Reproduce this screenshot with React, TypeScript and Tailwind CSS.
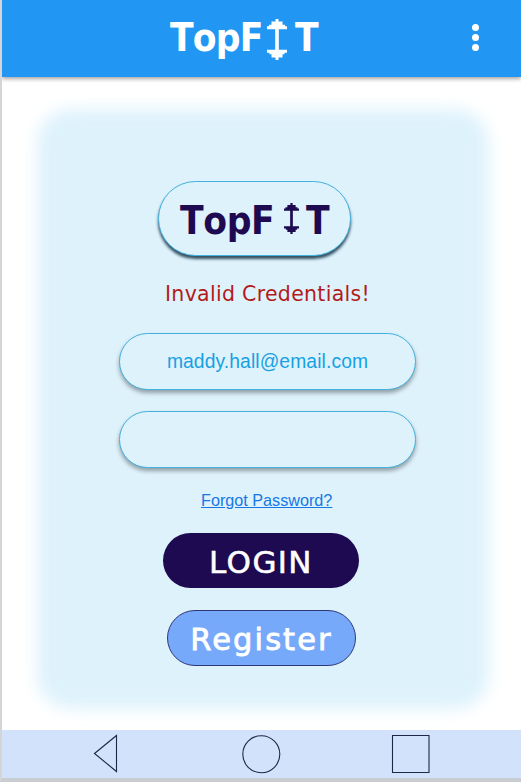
import type { SVGProps } from 'react';

function Barbell(props: SVGProps<SVGSVGElement>) {
  return (
    <svg viewBox="0 0 20 40" fill="currentColor" preserveAspectRatio="none" {...props}>
      <path d="M8.500 0h3v2.500h4v3h2.500v1.500h2v3h-8.200v20H20v3h-2.500v1.500h-2v3h-4V40h-3v-2.500h-4v-3H2.500V33H0v-3h8.200V10H0V7h2V5.500h2.500v-3h4z" />
    </svg>
  );
}

const display = "font-['DejaVu_Sans_Condensed','DejaVu_Sans',sans-serif] [font-stretch:condensed] [font-kerning:none] font-bold whitespace-pre";

export default function App() {
  return (
    <div className="flex h-[782px] w-[521px] flex-col overflow-hidden border-b-4 border-l-2 border-b-[#c9ccd1] border-l-[#d3d5d8] bg-white">
      <header className="z-10 flex h-[77px] shrink-0 items-start bg-[#2196f3] text-white shadow-[0_2px_4px_rgba(0,0,0,0.35)]">
        <div className={`ml-[168px] mt-[17px] flex w-[150px] items-start text-[38.5px] leading-[42px] ${display}`}>
          <span className="w-[97px] tracking-[-0.8px]">TopF</span>
          <Barbell className="mt-[2px] h-[41px] w-5 shrink-0" />
          <span className="ml-[8px]">T</span>
        </div>
        <div className="ml-[152px] mt-[24px] flex flex-col gap-[3px]">
          <i className="size-[7px] rounded-full bg-white" />
          <i className="size-[7px] rounded-full bg-white" />
          <i className="size-[7px] rounded-full bg-white" />
        </div>
      </header>

      <main className="h-[653px] shrink-0 px-[46px] pt-[46px]">
        <section className="relative isolate flex h-[575px] w-[430px] flex-col">
          <div className="absolute -inset-x-[11px] -bottom-[11px] -top-[14px] -z-10 rounded-[34px] bg-[#def2fc] blur-[8px]" />
          <div className="ml-[110px] mt-[58px] flex h-[75px] w-[193px] shrink-0 items-start rounded-full border border-[#42b1df] bg-[#def2fc] pl-[21px] pt-[18px] text-[#1e0a50] shadow-[0_3px_3px_#344f60]">
            <div className={`flex w-[152px] items-start text-[38.5px] leading-[42px] ${display}`}>
              <span className="w-[104px] tracking-[-0.4px]">TopF</span>
              <Barbell className="mt-[3px] h-[31px] w-[15px] shrink-0" />
              <span className="ml-[7px]">T</span>
            </div>
          </div>
          <p className="ml-[117px] mt-[26px] h-6 whitespace-nowrap font-['DejaVu_Sans',sans-serif] text-[20.5px] leading-6 tracking-[0.3px] text-[#b31b1b]">Invalid Credentials!</p>
          <div className="ml-[71px] mt-[27px] flex h-[57px] w-[297px] shrink-0 items-center justify-center rounded-full border border-[#42b1df] bg-[#def2fc] pt-[2px] font-['Liberation_Sans',sans-serif] text-[19.3px] tracking-[0.1px] text-[#16a1e3] shadow-[0_3px_4px_rgba(0,0,0,0.35)]">maddy.hall@email.com</div>
          <div className="ml-[71px] mt-[21px] h-[57px] w-[297px] shrink-0 rounded-full border border-[#42b1df] bg-[#def2fc] shadow-[0_3px_4px_rgba(0,0,0,0.35)]" />
          <a className="ml-[153px] mt-[22px] h-5 whitespace-nowrap font-['Liberation_Sans',sans-serif] text-[16.2px] leading-5 text-[#1478e4] underline">Forgot Password?</a>
          <button className="ml-[115px] mt-[23px] flex h-[55px] w-[196px] shrink-0 items-center justify-center rounded-full bg-[#1e0a50] pt-[4px] font-['DejaVu_Sans',sans-serif] text-[31px] leading-none tracking-[1.4px] text-white [-webkit-text-stroke:0.6px_white]">LOGIN</button>
          <button className="ml-[119px] mt-[22px] flex h-[56px] w-[189px] shrink-0 items-center justify-center rounded-full border border-[#303778] bg-[#77a9fa] pt-[4px] font-['DejaVu_Sans',sans-serif] text-[30.5px] leading-none tracking-[2.1px] text-white [-webkit-text-stroke:0.8px_white]">Register</button>
        </section>
      </main>

      <nav className="h-[48px] shrink-0 bg-[#d3e2fb]">
        <svg width="519" height="48" viewBox="2 730 519 48" fill="none" stroke="#1d2748" strokeWidth="1.100">
          <path d="M94.500 753.500 116.500 735.500v36z" />
          <circle cx="261.300" cy="754.200" r="18.500" />
          <path d="M392.500 735.500h36.500v37h-36.500z" />
        </svg>
      </nav>
    </div>
  );
}
